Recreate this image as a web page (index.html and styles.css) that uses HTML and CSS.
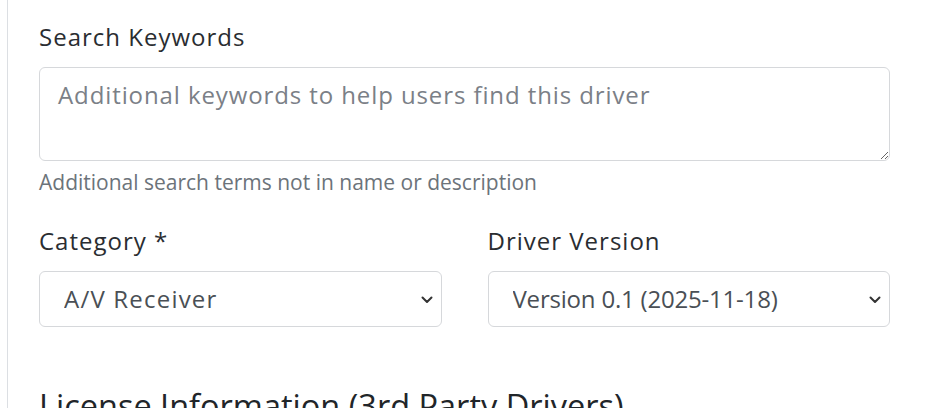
FILE: index.html
```html
<!DOCTYPE html>
<html lang="en">
<head>
<meta charset="utf-8">
<title>Driver form</title>
<link rel="stylesheet" href="styles.css">
</head>
<body>
<div class="card">
  <div class="field field-first">
    <label class="label" for="kw">Search Keywords</label>
    <textarea id="kw" class="control area" rows="2" placeholder="Additional keywords to help users find this driver"></textarea>
    <div class="help">Additional search terms not in name or description</div>
  </div>
  <div class="row">
    <div class="field">
      <label class="label" for="cat">Category *</label>
      <div class="select-wrap">
        <select id="cat" class="control select select-wide"><option>A/V Receiver</option></select>
        <svg class="chev" width="12" height="8" viewBox="0 0 12 8"><path d="M1.5 1.5 6 6l4.5-4.5" fill="none" stroke="#333" stroke-width="2" stroke-linecap="round" stroke-linejoin="round"/></svg>
      </div>
    </div>
    <div class="field">
      <label class="label" for="ver">Driver Version</label>
      <div class="select-wrap">
        <select id="ver" class="control select select-tight"><option>Version 0.1 (2025-11-18)</option></select>
        <svg class="chev" width="12" height="8" viewBox="0 0 12 8"><path d="M1.5 1.5 6 6l4.5-4.5" fill="none" stroke="#333" stroke-width="2" stroke-linecap="round" stroke-linejoin="round"/></svg>
      </div>
    </div>
  </div>
  <h3 class="heading">License Information (3rd Party Drivers)</h3>
</div>
</body>
</html>
```
FILE: styles.css
```css
html, body {
  margin: 0;
  padding: 0;
  background: #ffffff;
  overflow: hidden;
}
body {
  font-family: "Open Sans", "DejaVu Sans", sans-serif;
  color: #212529;
}
.card {
  margin-left: 7px;
  border-left: 1px solid #dcdfe3;
  padding: 19px 45px 0 31px;
  min-height: 420px;
  box-sizing: border-box;
}
.field {
  margin-bottom: 24px;
}
.field-first {
  margin-bottom: 25px;
}
.label {
  display: block;
  font-size: 24px;
  line-height: 36px;
  margin-bottom: 12px;
  color: #2a2d31;
  letter-spacing: 1px;
}
.control {
  display: block;
  width: 100%;
  box-sizing: border-box;
  font-family: inherit;
  font-size: 24px;
  line-height: 36px;
  color: #4a4f55;
  background: #fff;
  border: 1px solid #d6d8db;
  border-radius: 6px;
  padding: 9px 18px;
  margin: 0;
}
.area {
  height: 94px;
  resize: vertical;
  letter-spacing: 0.9px;
}
.area::placeholder {
  color: #7b8087;
  opacity: 1;
}
.help {
  margin-top: 6px;
  font-size: 21px;
  line-height: 31px;
  color: #6c737a;
}
.row {
  display: grid;
  grid-template-columns: 1fr 1fr;
  column-gap: 46px;
}
.row .field {
  margin-bottom: 0;
}
.select-wrap {
  position: relative;
}
.select {
  appearance: none;
  -webkit-appearance: none;
  height: 56px;
  padding-left: 24px;
}
.select-wide {
  letter-spacing: 1.2px;
}
.select-tight {
  letter-spacing: -0.2px;
}
.chev {
  position: absolute;
  right: 9px;
  top: 25px;
}
.heading {
  margin: 59px 0 0;
  font-size: 32.5px;
  line-height: 40px;
  font-weight: 400;
  color: #212529;
}
```
